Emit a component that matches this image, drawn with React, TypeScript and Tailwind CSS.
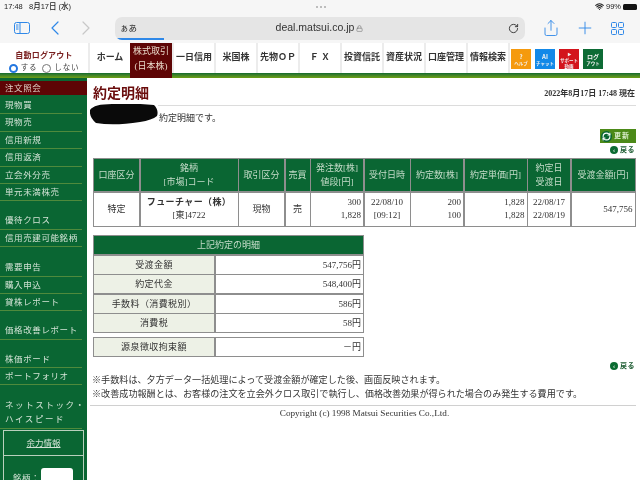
import { ChevronLeft, ChevronRight, Share, Plus, RotateCw, Lock, Wifi, RefreshCw } from "lucide-react";

const font = { fontFamily: '"Liberation Serif","Noto Sans CJK JP",serif' };
const cols = "grid-cols-[45px_97px_45px_24px_52px_45px_52px_62px_42px_63px]";

const navItems = ["一日信用", "米国株", "先物ＯＰ", "Ｆ Ｘ", "投資信託", "資産状況", "口座管理", "情報検索"];

function Row({ t, className = "" }: { t: string; className?: string }) {
  return <div className={`h-[17.4px] shrink-0 mr-[5px] pl-[5px] leading-[16px] text-[8.5px] tracking-[0.6px] text-[#d3e3d6] border-b border-[#4f8a3c] whitespace-nowrap ${className}`}>{t}</div>;
}

function Back({ className = "" }: { className?: string }) {
  return (
    <div className={`flex items-center justify-end gap-[2px] text-[7px] text-[#1d5c32] font-bold leading-none ${className}`}>
      <span className="w-[8px] h-[8px] rounded-full bg-[#0b6b31] flex items-center justify-center text-white text-[6px]">‹</span>
      <span className="tracking-[0.5px]">戻る</span>
    </div>
  );
}

function Tile({ bg, top, mid, bot }: { bg: string; top: string; mid: string; bot?: string }) {
  return (
    <div className={`w-[20px] h-[20px] ${bg} flex flex-col items-center justify-center text-[#f3f3f3] font-bold leading-[6px] text-[4.5px] overflow-hidden whitespace-nowrap`} style={{ fontFamily: '"Noto Sans CJK JP",sans-serif' }}>
      <span className="text-[6px] leading-[7px]">{top}</span>
      <span>{mid}</span>
      {bot && <span>{bot}</span>}
    </div>
  );
}

function Sum({ k, v, className = "" }: { k: string; v: string; className?: string }) {
  return (
    <div className={`grid grid-cols-[120px_1fr] gap-[2px] bg-[#8e8e8e] p-[1px] h-[20px] text-[9px] leading-[18px] ${className}`}>
      <div className="bg-[#edf1e6] text-center text-[#333] tracking-[0.4px]">{k}</div>
      <div className="bg-white text-right pr-[2px] text-[#333]">{v}</div>
    </div>
  );
}

function Th({ children }: { children: React.ReactNode }) {
  return <div className="h-[32px] bg-[#0a6633] text-[#c5dcc9] text-[9px] leading-[14px] flex flex-col items-center justify-center text-center whitespace-nowrap">{children}</div>;
}
function Td({ children, className = "" }: { children: React.ReactNode; className?: string }) {
  return <div className={`bg-white text-[#333] text-[9px] leading-[13px] flex flex-col justify-center whitespace-nowrap ${className}`}>{children}</div>;
}

export default function App() {
  return (
    <div className="w-[640px] h-[480px] overflow-hidden bg-white flex flex-col blur-[0.4px]" style={font}>
      {/* Safari chrome */}
      <div className="h-[43px] bg-[#f6f6f6] shrink-0 flex flex-col" style={{ fontFamily: '"Liberation Sans","Noto Sans CJK JP",sans-serif' }}>
        <div className="h-[13px] flex items-center justify-between pl-[4px] pr-[3px] text-[7.5px] text-[#222] font-medium">
          <span className="w-[120px]">17:48&nbsp;&nbsp;&nbsp;8月17日 (水)</span>
          <div className="flex gap-[2px]">
            <span className="w-[2px] h-[2px] rounded-full bg-[#aaa]" />
            <span className="w-[2px] h-[2px] rounded-full bg-[#aaa]" />
            <span className="w-[2px] h-[2px] rounded-full bg-[#aaa]" />
          </div>
          <div className="w-[120px] flex items-center justify-end gap-[2px]">
            <Wifi size={9} strokeWidth={3} />
            <span>99%</span>
            <span className="w-[14px] h-[6px] rounded-[1.5px] bg-[#111]" />
          </div>
        </div>
        <div className="flex-1 flex items-center">
          <div className="w-[115px] flex items-center pl-[14px] text-[#2f88e8]">
            <svg width="16" height="13" viewBox="0 0 16 13" fill="none" stroke="currentColor" strokeWidth="1">
              <rect x="0.5" y="0.5" width="15" height="11" rx="2" />
              <path d="M6 0.5v11" />
              <path d="M2 3h2.5M2 5h2.5M2 7h2.5" />
            </svg>
            <ChevronLeft size={24} strokeWidth={1.2} className="ml-[13px]" />
            <ChevronRight size={24} strokeWidth={1.2} className="text-[#c8c8c8] ml-[7px]" />
          </div>
          <div className="w-[410px] h-[23px] rounded-[7px] bg-[#e5e5e5] flex items-center relative overflow-hidden">
            <span className="pl-[5px] text-[8.5px] text-[#222] w-[103px]">ぁあ</span>
            <span className="flex-1 text-center text-[10.5px] text-[#333] pr-[104px] flex items-center justify-center gap-[2px] whitespace-nowrap">deal.matsui.co.jp <Lock size={7} className="text-[#777]" /></span>
            <RotateCw size={11} className="absolute right-[6px] top-[6px] text-[#333]" />
            <span className="absolute left-0 bottom-0 h-[2px] w-[49px] bg-[#2f88e8]" />
          </div>
          <div className="flex-1 flex items-center text-[#2f88e8] pl-[17px] gap-[15px]">
            <Share size={18} strokeWidth={1.2} />
            <Plus size={20} strokeWidth={1.1} />
            <svg width="13" height="13" viewBox="0 0 13 13" fill="none" stroke="currentColor" strokeWidth="1" className="ml-[1px]">
              <rect x="0.5" y="0.5" width="5" height="5" rx="1" />
              <rect x="7.5" y="0.5" width="5" height="5" rx="1" />
              <rect x="0.5" y="7.5" width="5" height="5" rx="1" />
              <rect x="7.5" y="7.5" width="5" height="5" rx="1" />
            </svg>
          </div>
        </div>
      </div>

      {/* Nav */}
      <div className="h-[35px] shrink-0 flex bg-white relative">
        <div className="w-[88px] shrink-0 flex flex-col items-center pt-[7px] text-[8px] leading-[12px]">
          <span className="text-[#7a2020] font-bold tracking-[0.2px]">自動ログアウト</span>
          <div className="flex items-center gap-[3px] text-[#444] tracking-[0.8px] text-[7.5px]">
            <span className="w-[9px] h-[9px] rounded-full border-[2.5px] border-[#2477e0] bg-white" />
            <span className="mr-[2px]">する</span>
            <span className="w-[9px] h-[9px] rounded-full border border-[#777] bg-white" />
            <span>しない</span>
          </div>
        </div>
        <div className="w-[42px] border-l-2 border-[#ececec] flex items-center justify-center text-[9px] font-bold text-[#333] pb-[5px] whitespace-nowrap">ホーム</div>
        <div className="w-[42px] z-10 bg-[#5e0505] text-[#e9d9c9] text-[9px] leading-[15px] pt-[1px] text-center whitespace-nowrap">
          <div>株式取引</div>
          <div>(日本株)</div>
        </div>
        {navItems.map((t) => (
          <div key={t} className="w-[42px] border-l-2 border-[#ececec] flex items-center justify-center text-[9px] font-bold text-[#333] pb-[5px] whitespace-nowrap overflow-hidden">{t}</div>
        ))}
        <div className="border-l-2 border-[#ececec] pl-[1px] pt-[6px] flex gap-[4px] items-start">
          <Tile bg="bg-[#f59a0e]" top="?" mid="ヘルプ" />
          <Tile bg="bg-[#1389e8]" top="AI" mid="チャット" />
          <Tile bg="bg-[#d3141c]" top="▸" mid="サポート" bot="動画" />
          <Tile bg="bg-[#0d6b35]" top="ログ" mid="アウト" />
        </div>
        <div className="absolute left-0 right-0 bottom-0 h-[5px] bg-gradient-to-b from-[#0d6b2e] to-[#6ea00e]" />
      </div>

      <div className="flex-1 flex min-h-0">
        {/* Sidebar */}
        <div className="w-[87px] shrink-0 bg-[#0a6633] pt-[3px] flex flex-col">
          <div className="h-[14px] shrink-0 mb-[2px] bg-[#5e0505] pl-[5px] text-[8.5px] leading-[14px] tracking-[0.6px] text-[#e0cfc5]">注文照会</div>
          <Row t="現物買" />
          <Row t="現物売" />
          <Row t="信用新規" />
          <Row t="信用返済" />
          <Row t="立会外分売" />
          <Row t="単元未満株売" className="mb-[11px]" />
          <Row t="優待クロス" />
          <Row t="信用売建可能銘柄" className="mb-[12px]" />
          <Row t="需要申告" />
          <Row t="購入申込" />
          <Row t="貸株レポート" className="mb-[11px]" />
          <Row t="価格改善レポート" className="mb-[11px]" />
          <Row t="株価ボード" />
          <Row t="ポートフォリオ" className="mb-[13px]" />
          <div className="shrink-0 mr-[5px] pl-[5px] text-[8.5px] leading-[14px] tracking-[1.6px] text-[#d3e3d6] border-b border-[#4f8a3c] pb-[2px] whitespace-nowrap">ネットストック・<br />ハイスピード</div>
          <div className="shrink-0 h-[60px] mx-[3px] mt-[1px] border border-[#b9d0bd] text-[#d3e3d6] text-[8.5px]">
            <div className="h-[25px] leading-[25px] text-center underline border-b border-[#b9d0bd]">余力情報</div>
            <div className="flex items-center pl-[9px] pt-[12px] gap-[1px]">
              <span className="tracking-[0.5px]">銘柄：</span>
              <span className="w-[32px] h-[20px] rounded-[3px] bg-white" />
            </div>
          </div>
        </div>

        {/* Main */}
        <div className="flex-1 min-w-0 pl-[6px] pr-[4px] pt-[6px] flex flex-col">
          <div className="flex items-center justify-between h-[19px] pr-[1px]">
            <span className="text-[14px] font-bold text-[#6b0d0d] leading-[20px] whitespace-nowrap">約定明細</span>
            <span className="text-[8px] font-bold text-[#333] whitespace-nowrap">2022年8月17日 17:48 現在</span>
          </div>
          <div className="flex items-center h-[22px] -ml-[3px]">
            <svg width="68" height="21" viewBox="0 0 68 21" className="shrink-0">
              <path d="M0 6 Q4 0 22 0 Q44 -1 64 1 Q69 6 67 12 Q62 16 50 18 Q24 22 6 19 Q-1 13 0 6Z" fill="#0a0a0a" />
            </svg>
            <div className="flex-1 self-stretch flex flex-col">
              <div className="h-[2px] mt-[2px] border-t border-[#dcdcdc]" />
              <div className="flex-1 flex items-center pt-[5px] pl-[1px]">
                <span className="text-[9px] text-[#333]">約定明細です。</span>
              </div>
            </div>
          </div>

          <div className="flex flex-col items-end mt-[4px]">
            <div className="w-[36px] h-[14px] bg-[#4c8a18] flex items-center gap-[2px] pl-[1px] text-[7px] font-bold text-[#d8ecc8] tracking-[1px]">
              <span className="w-[11px] h-[11px] rounded-full bg-[#0a6633] flex items-center justify-center"><RefreshCw size={9} strokeWidth={3} className="text-white" /></span>
              <span>更新</span>
            </div>
            <Back className="mt-[3px] pr-[1px]" />
          </div>

          <div className={`grid ${cols} gap-[1.5px] bg-[#8e8e8e] p-[1px] mt-[4px] w-[543px]`}>
            <Th>口座区分</Th>
            <Th><span>銘柄</span><span>[市場]コード</span></Th>
            <Th>取引区分</Th>
            <Th>売買</Th>
            <Th><span>発注数[株]</span><span>値段[円]</span></Th>
            <Th>受付日時</Th>
            <Th>約定数[株]</Th>
            <Th>約定単価[円]</Th>
            <Th><span>約定日</span><span>受渡日</span></Th>
            <Th>受渡金額[円]</Th>
            <Td className="h-[33px] items-center">特定</Td>
            <Td className="items-center"><span className="font-bold tracking-[0.4px]">フューチャー（株）</span><span>[東]4722</span></Td>
            <Td className="items-center">現物</Td>
            <Td className="items-center">売</Td>
            <Td className="items-end pr-[2px]"><span>300</span><span>1,828</span></Td>
            <Td className="items-center"><span>22/08/10</span><span>[09:12]</span></Td>
            <Td className="items-end pr-[2px]"><span>200</span><span>100</span></Td>
            <Td className="items-end pr-[2px]"><span>1,828</span><span>1,828</span></Td>
            <Td className="items-center"><span>22/08/17</span><span>22/08/19</span></Td>
            <Td className="items-end pr-[2px]">547,756</Td>
          </div>

          <div className="w-[271px] mt-[8px] flex flex-col">
            <div className="h-[20px] shrink-0 bg-[#0a6633] border border-[#8e8e8e] text-center text-[9px] leading-[18px] text-[#c5dcc9]">上記約定の明細</div>
            <Sum k="受渡金額" v="547,756円" />
            <Sum k="約定代金" v="548,400円" className="-mt-[0.5px]" />
            <Sum k="手数料（消費税別）" v="586円" className="-mt-[0.5px]" />
            <Sum k="消費税" v="58円" className="-mt-[0.5px]" />
            <Sum k="源泉徴収拘束額" v="－円" className="mt-[4px]" />
          </div>

          <Back className="mt-[5px] pr-[1px]" />
          <div className="mt-[3px] text-[9.1px] leading-[14px] text-[#333] -ml-[1px] whitespace-nowrap">
            <div>※手数料は、夕方データ一括処理によって受渡金額が確定した後、画面反映されます。</div>
            <div>※改善成功報酬とは、お客様の注文を立会外クロス取引で執行し、価格改善効果が得られた場合のみ発生する費用です。</div>
          </div>
          <div className="mt-[4px] -ml-[3px] border-t border-[#d0d0d0]" />
          <div className="mt-[1px] text-center text-[9.2px] text-[#333] whitespace-nowrap">Copyright (c) 1998 Matsui Securities Co.,Ltd.</div>
        </div>
      </div>
    </div>
  );
}
